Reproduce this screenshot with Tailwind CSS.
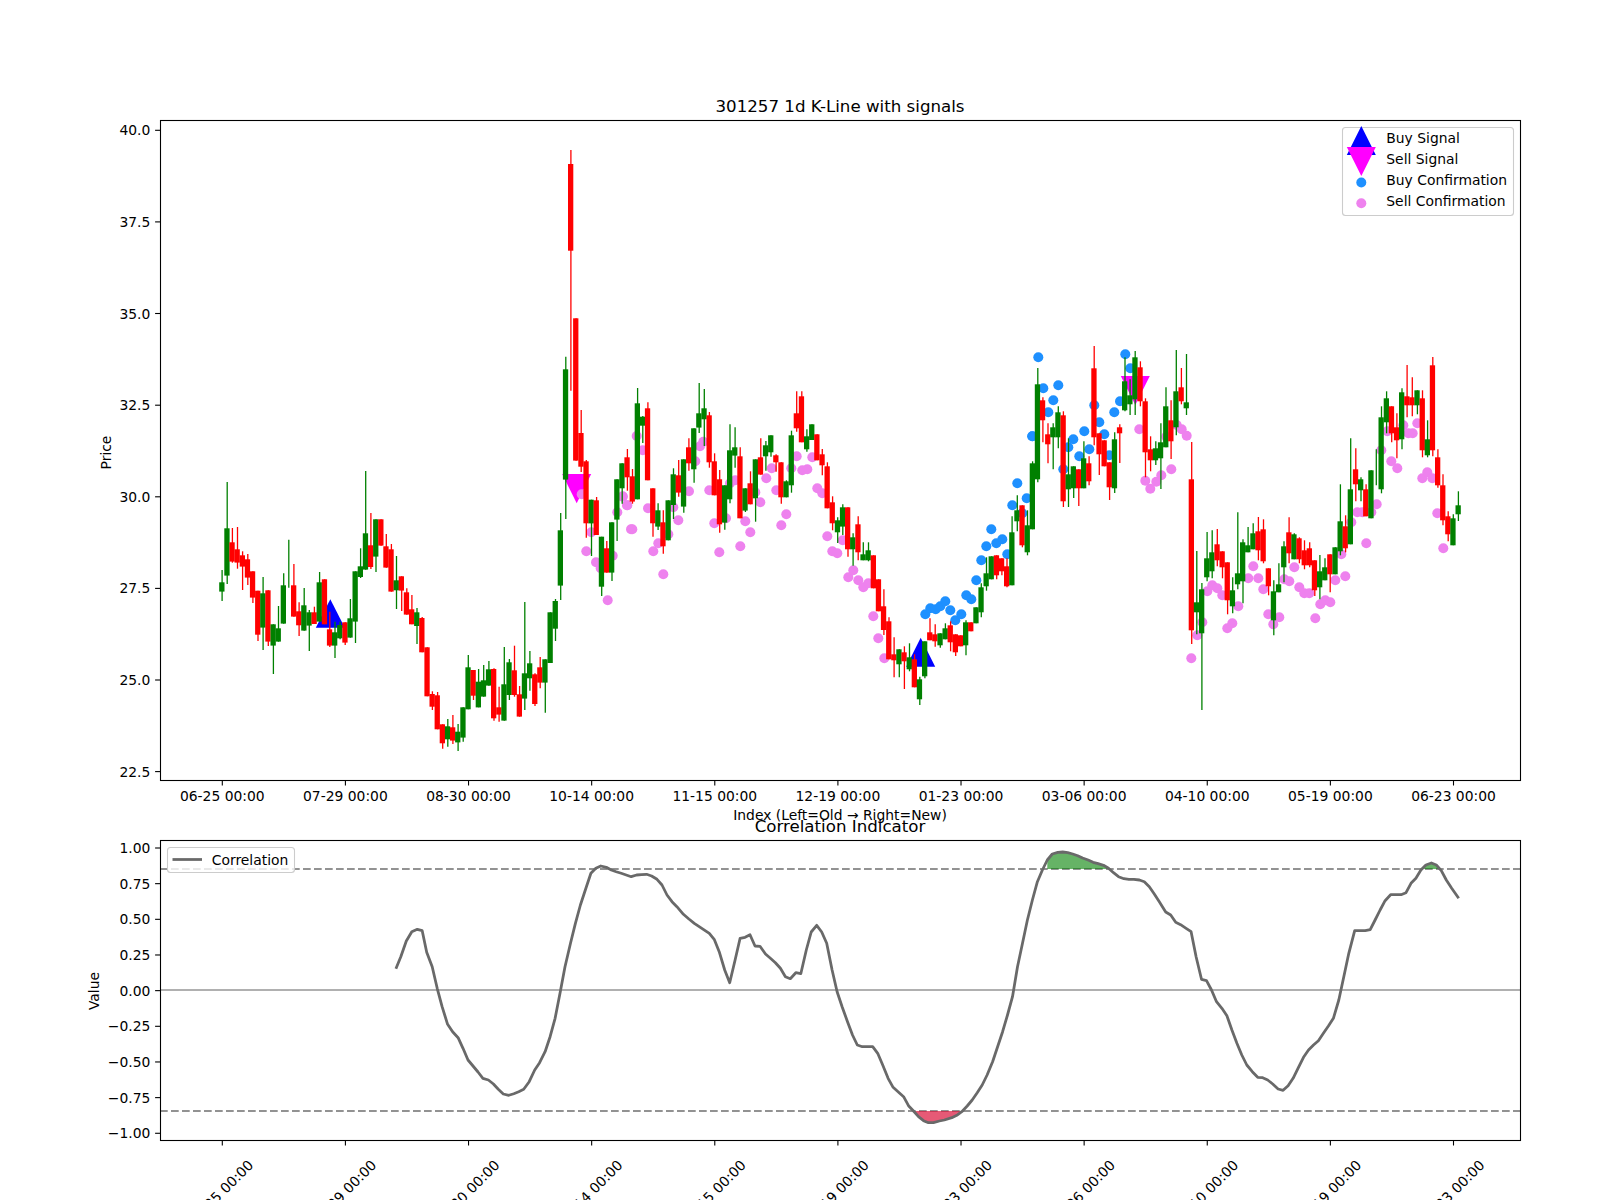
<!DOCTYPE html>
<html lang="en">
<head>
    <meta charset="utf-8"/>
    <title>301257 1d K-Line with signals</title>
    <script src="https://cdn.jsdelivr.net/npm/@tailwindcss/browser@4"></script>
</head>
<body class="bg-white">
    <div class="w-[1600px] h-[1200px] overflow-hidden bg-white font-['DejaVu_Sans',sans-serif] text-[13.89px] text-black">
        <svg id="chart" class="block fill-black" width="1600" height="1200" viewBox="0 0 1600 1200" xmlns="http://www.w3.org/2000/svg"></svg>
    </div>

    <script>
        // candles: colour, wick top, body top, body bottom, wick bottom (y = y0 + v / 3)
        const candleSegments = [
            [440, `G 390 427 455 483|G 126 265 407 432|R 264 307 365 368|R 261 328 368 386|R 334 346 380 450|R 342 358 413 435|R 394 394 473 489|R 452 452 584 603|G 411 460 563 630|R 451 451 605 618|G 553 553 617 702|G 498 565 605 605|G 400 436 551 551|G 299 0 0 443|R 372 436 530 530|R 487 514 556 588|G 444 496 572 572|G 510 517 557 633|R 500 517 552 552|G 396 427 545 545|R 418 418 553 553|R 515 568 617 621|G 545 577 617 654|G 545 555 595 598|R 547 547 608 615|G 477 535 593 593|G 394 394 545 609|G 325 379 411 414|G 93 280 389 389|R 219 316 381 387|G 238 238 350 396|R 238 238 317 317|R 282 319 383 383|R 312 328 455 455|G 348 421 451 507|R 409 409 452 513|R 445 457 524 524|R 465 508 553 553|G 504 517 558 612|R 531 534 637 637|R 622 622 769 769|R 754 762 800 810|R 756 766 868 868|R 853 853 910 926|G 837 859 898 920|R 825 862 902 912|G 852 875 907 933|G 802 802 893 905|G 645 682 808 808|R 690 690 767 780|G 687 725 802 802|G 675 721 770 770|G 663 688 737 737|R 685 687 835 842|R 740 802 824 845|G 621 733 842 842|G 657 667 765 780|R 617 691 765 770|R 738 763 830 830|G 486 700 776 810|G 633 670 715 752|R 700 703 792 798|R 651 682 728 745|G 658 658 728 818|G 517 517 669 669|G 477 483 566 603|G 219 271 437 480|G -250 -212 119 237|R -870 -828 -568 -148|R -365 -365 62 62|R -90 -21 80 96|R 60 64 250 293|G 179 179 250 348|R 171 181 285 285|G 290 290 440 468|R 303 325 398 398|G 247 247 398 423|G 118 118 239 303|G 70 70 145 191|R 27 52 112 152`],
            [360, `R 327 349 425 431|G 84 130 418 418|G 168 170 197 249|R 127 145 361 361|R 385 385 490 530|G 430 451 500 510|R 451 487 559 581|G 421 421 541 541|G 325 343 435 477|R 300 346 398 410|G 298 298 440 458|R 235 262 310 332|G 205 205 328 368|G 69 160 203 219|G 87 145 178 258|R 156 166 307 323|R 280 304 406 406|R 330 358 493 518|G 376 376 488 509|G 193 271 418 430|G 202 262 287 323|R 262 289 475 475|G 385 385 452 456|R 334 370 433 433|G 298 298 415 485|R 235 292 344 344|G 243 256 289 332|G 226 226 277 290|R 283 286 307 335|R 307 307 412 431|G 361 364 412 412|G 212 226 376 398|R 94 160 205 215|R 94 109 247 247|G 208 229 268 275|G 193 193 240 240|R 223 223 301 301|R 267 283 316 346|R 307 319 445 445|R 409 427 490 511|G 472 481 517 549|G 433 442 500 525|R 442 442 568 590|G 520 532 568 617|R 469 493 577 601|G 547 583 601 601|G 547 571 601 604|R 586 586 685 685|R 658 658 754 754|R 688 739 810 825|R 772 784 898 898|R 832 883 901 952|G 868 868 913 952|R 859 877 904 987|G 850 892 928 934|R 883 898 982 982|G 950 958 1018 1035|G 844 844 949 955|R 775 817 841 841|R 793 823 844 860|G 820 820 856 863|G 790 805 838 838|R 784 796 847 874|R 823 823 877 888|R 826 826 859 859|G 781 787 856 886|R 787 787 814 814|G 742 742 790 790|G 670 682 757 772|G 592 640 679 692|G 589 589 658 658|R 586 586 646 658|R 595 595 634 646|R 595 619 679 682|G 469 517 676 676|G 406 451 484 514|R 436 436 556 562|G 451 496 577 586|G 304 310 508 508|G 24 73 358 367|R 112 121 181 247|R 190 223 253 310|G 190 202 232 328|G 139 157 232 265`],
            [330, `R 244 256 514 531|G 325 433 478 531|G 409 409 475 504|R 418 418 475 528|G 334 385 475 475|R 379 400 454 466|R 48 115 322 346|R 310 310 373 435|R 331 331 409 409|R 397 397 472 510|G 307 328 475 489|R 283 292 310 399|G 82 154 241 244|G 148 196 223 255|G 63 82 208 255|R 94 112 214 229|R 205 214 367 442|R 319 358 391 424|G 334 355 391 405|G 280 337 385 477|G 172 229 352 352|R 211 271 334 387|G 60 184 292 316|R 114 172 214 223|G 72 217 235 255`],
            [340, `R 306 418 871 912|G 633 787 817 883|G 729 748 880 1110|G 576 655 712 724|G 571 637 694 715|R 567 613 661 679|R 634 634 682 715|R 667 667 781 823|G 712 751 799 820|G 517 700 733 748|G 598 607 724 790|G 561 616 637 637|G 550 580 628 628|R 531 574 631 661|R 538 568 664 670|R 685 685 739 766|G 721 754 841 886|G 670 733 757 757|G 604 619 682 727|R 532 577 640 670|G 580 583 658 658|R 592 595 658 670|R 601 631 676 688|R 607 625 676 682|R 661 661 751 768|G 645 694 742 778|G 655 682 721 721|R 643 643 703 757|G 622 622 703 703|G 433 544 634 646|R 526 559 625 637|G 295 448 613 613|R 325 388 433 484|G 412 418 451 484|R 433 448 529 529|G 391 391 535 535|G 328 0 0 436|G 199 232 448 460|G 154 175 247 280|R 199 199 280 307|R 220 262 301 355|G 145 157 298 328|R 75 169 196 232|R 112 172 196 229|G 151 151 196 223|R 151 175 331 352|G 241 298 346 352|R 51 76 331 349|R 328 352 436 443|R 403 436 541 556|R 514 529 583 604|G 523 535 616 616|G 454 496 523 543`]
        ];

        // confirmation dots, read as [x0, y0, "x,y ..."] (real = x0 + x / 3)
        const pinkDots = [
            [150, 440, '1295,163 1324,277 1309,334 1338,367 1352,385 1373,481 1388,347 1402,217 1418,170 1431,196 1443,268'],
            [620, 360, '50,228 68,271 8,409 22,436 84,445 37,508 115,550 100,574 130,643 145,523 160,442 175,481 207,394 226,304 240,259 250,245 268,391 283,490 298,577 318,475 330,370 346,361 361,559 376,484 391,517 406,397 421,427 439,355 455,325 469,391 484,496 499,463 514,325 530,289 547,331 562,328 577,292 592,385 607,400 622,529 637,574 652,580 668,541 685,652 700,631 715,661 730,682 745,670 760,769 775,835 793,895'],
            [1000, 330, '418,298 436,452 451,476 469,455 484,436 499,320 514,418 530,285 545,298 560,317'],
            [1180, 340, '34,955 52,886 67,847 82,754 97,736 112,745 127,766 142,865 157,850 175,799 205,715 220,679 235,715 250,748 265,823 280,853 298,832 313,718 328,724 343,682 358,742 373,760 388,760 406,835 421,793 436,781 451,787 466,721 484,643 496,709 514,547 532,517 547,517 559,610 574,517 590,493 604,331 622,274 634,364 652,385 670,256 685,280 698,280 712,250 727,415 742,397 757,415 772,520 790,625']
        ];
        const blueDots = [
            [620, 360, '916,763 931,745 947,748 961,739 976,724 991,751 1006,781 1024,763 1039,706 1054,718 1069,661 1084,601 1099,559 1114,508 1129,550 1147,538 1162,583 1177,436 1192,370 1207,460 1220,415 1237,229'],
            [1000, 330, '97,319 115,82 130,175 145,247 160,211 175,166 190,418 205,352 220,328 238,379 253,304 268,358 283,226 298,277 313,313 328,376 343,247 360,214 376,73 391,115']
        ];

        // correlation line, zoomed coords: x = x0 + x / 2.0103, y = 780 + y / 3
        const corrA = '635,566 645,530 656,483 667,455 678,448 688,452 697,517 708,560 718,625 728,680 739,733 749,755 760,773 770,805 780,840 790,858 800,876 810,895 821,900 831,912 841,928 851,942 862,946 872,941 882,935 892,928 903,905 914,870 924,848 935,815 945,770 955,715 965,640 975,560 986,490 996,430 1006,375 1017,325 1027,280 1037,265 1047,258 1058,262 1068,270 1078,275 1088,280 1098,285 1108,290 1119,285 1129,284 1139,283 1149,288 1160,298 1170,315 1180,345 1190,365 1200,380 1213,403 1224,417 1235,430 1250,445 1265,460 1275,478 1285,515 1296,570 1306,608 1317,540 1327,475 1337,472 1347,464 1357,498 1367,499 1378,522 1388,535 1398,548 1408,565 1418,590 1428,596 1439,578 1449,581 1460,510 1470,456 1481,436 1491,456 1501,490 1512,570 1522,635 1532,680 1543,725 1553,765';
        const corrB = '75,795 85,800 106,800 116,820 126,855 137,895 147,922 158,937 168,950 178,977 188,993 198,1010 208,1022 218,1028 228,1028 240,1023 250,1020 265,1013 275,1006 285,995 296,978 306,960 316,938 326,915 336,885 347,845 357,800 367,755 377,705 387,650 397,560 407,490 417,420 427,360 437,305 447,270 457,240 467,222 478,217 488,216 498,218 508,222 518,227 528,234 539,240 549,247 559,251 570,256 580,265 590,278 600,290 611,296 621,298 631,298 642,300 652,305 662,320 672,342 682,365 695,396 705,405 715,427 725,434 736,445 746,455 756,530 767,598 777,602 787,630 797,665 808,685 818,707 828,750 838,790 848,825 858,855 869,875 880,892 890,893 900,900 910,912 921,927 931,931 941,917 951,895 961,865 972,832 982,810 992,795 1002,782 1012,760 1022,738 1032,715 1043,660 1053,590 1063,520 1075,452 1086,452 1096,452 1106,449 1116,420 1126,390 1136,362 1147,344 1157,344 1168,344 1178,338 1188,310 1198,295 1208,270 1218,255 1229,249 1239,255 1249,272 1259,300 1270,325 1284,355';

        const tickLabels = ['06-25 00:00', '07-29 00:00', '08-30 00:00', '10-14 00:00', '11-15 00:00', '12-19 00:00', '01-23 00:00', '03-06 00:00', '04-10 00:00', '05-19 00:00', '06-23 00:00'];
        const priceTicks = [['40.0', 130.3], ['37.5', 221.9], ['35.0', 313.5], ['32.5', 405.2], ['30.0', 496.8], ['27.5', 588.4], ['25.0', 680], ['22.5', 771.6]];
        const valueTicks = ['1.00', '0.75', '0.50', '0.25', '0.00', '−0.25', '−0.50', '−0.75', '−1.00'];
        const xOf = i => 221.8 + 5.13 * i;

        let out = '';
        const line = (x1, y1, x2, y2, stroke, w, extra = '') => `<line x1="${x1}" y1="${y1}" x2="${x2}" y2="${y2}" stroke="${stroke}" stroke-width="${w}" ${extra}/>`;
        const text = (x, y, s, extra = '') => `<text x="${x}" y="${y}" ${extra}>${s}</text>`;
        const poly = (pts, fill, extra = '') => `<polygon points="${pts}" fill="${fill}" ${extra}/>`;
        const parsePts = s => s.split(' ').map(p => p.split(',').map(Number));

        function triangle(x, tipY, baseY, fill) {
            return poly(`${x},${tipY} ${x - 14.5},${baseY} ${x + 14.5},${baseY}`, fill);
        }

        function axesFrame(top, bottom) {
            return `<rect x="160.5" y="${top}" width="1360" height="${bottom - top}" fill="none" stroke="#000" stroke-width="1.1"/>`;
        }

        // top panel
        out += triangle(330.3, 599.3, 627.7, '#0000ff');
        out += triangle(920.7, 637.7, 666.7, '#0000ff');
        out += triangle(576.7, 503.3, 474, '#ff00ff');
        out += triangle(1135.3, 405, 376, '#ff00ff');

        pinkDots.concat(blueDots).forEach(([x0, y0, list], idx) => {
            const fill = idx < pinkDots.length ? '#ee82ee' : '#1e90ff';
            parsePts(list).forEach(([x, y]) => {
                out += `<circle cx="${(x0 + x / 3).toFixed(1)}" cy="${(y0 + y / 3).toFixed(1)}" r="5" fill="${fill}"/>`;
            });
        });

        let idx = 0;
        candleSegments.forEach(([y0, rows]) => {
            rows.split('|').forEach(row => {
                const [c, wt, bt, bb, wb] = row.split(' ');
                const fill = c === 'G' ? '#008000' : '#ff0000';
                const x = xOf(idx);
                const y = v => (y0 + Number(v) / 3).toFixed(1);
                out += line((x + 0.3).toFixed(1), y(wt), (x + 0.3).toFixed(1), y(wb), fill, 1.3);
                if (bt !== bb) {
                    out += `<rect x="${(x - 2.65).toFixed(1)}" y="${y(bt)}" width="5.3" height="${(Number(bb - bt) / 3).toFixed(1)}" fill="${fill}"/>`;
                }
                idx++;
            });
        });

        out += axesFrame(120.5, 780.5);
        priceTicks.forEach(([label, y]) => {
            out += line(155.1, y, 160, y, '#000', 1.1);
            out += text(150.3, y + 5, label, 'text-anchor="end"');
        });
        tickLabels.forEach((label, i) => {
            const x = xOf(i * 24) + 0.5;
            out += line(x, 781, x, 785.5, '#000', 1.1);
            out += text(x, 801, label, 'text-anchor="middle"');
        });
        out += text(840, 112, '301257 1d K-Line with signals', 'text-anchor="middle" font-size="16.67"');
        out += text(840, 820, 'Index (Left=Old → Right=New)', 'text-anchor="middle"');
        out += text(111, 452.5, 'Price', 'text-anchor="middle" transform="rotate(-90 111 452.5)"');

        // top legend
        out += `<rect x="1342.5" y="127.5" width="171" height="88" rx="3" fill="#fff" fill-opacity="0.8" stroke="#ccc" stroke-width="1.1"/>`;
        out += triangle(1361.3, 126, 155, '#0000ff');
        out += triangle(1361.3, 176, 147, '#ff00ff');
        out += `<circle cx="1361.3" cy="182.5" r="5" fill="#1e90ff"/><circle cx="1361.3" cy="203.3" r="5" fill="#ee82ee"/>`;
        ['Buy Signal', 'Sell Signal', 'Buy Confirmation', 'Sell Confirmation'].forEach((label, i) => {
            out += text(1386.3, 143.3 + i * 20.9, label);
        });

        // bottom panel
        const ptsA = parsePts(corrA).map(([x, y]) => [80 + x / 2.0103, 780 + y / 3]);
        const ptsB = parsePts(corrB).map(([x, y]) => [820 + x / 2.0103, 780 + y / 3]);
        const corr = ptsA.concat(ptsB);
        const fmt = pts => pts.map(p => p[0].toFixed(1) + ',' + p[1].toFixed(1)).join(' ');

        out += line(160, 869, 1520, 869, '#929292', 2.08, 'stroke-dasharray="7.7 3.3"');
        out += line(160, 1111, 1520, 1111, '#929292', 2.08, 'stroke-dasharray="7.7 3.3"');
        out += line(160, 990, 1520, 990, '#b0b0b0', 2);

        // shaded zones past the thresholds
        [[1045, 1110, 869, '#008000', 0.6], [1420, 1445, 869, '#008000', 0.6]].forEach(([a, b, level, fill, op]) => {
            const part = corr.filter(p => p[0] >= a && p[0] <= b && p[1] <= level + 2);
            out += poly(`${part[0][0].toFixed(1)},${level} ${fmt(part)} ${part[part.length - 1][0].toFixed(1)},${level}`, fill, `fill-opacity="${op}"`);
        });
        const low = corr.filter(p => p[0] >= 900 && p[0] <= 965 && p[1] >= 1110);
        out += poly(`${low[0][0].toFixed(1)},1111 ${fmt(low)} ${low[low.length - 1][0].toFixed(1)},1111`, '#dc143c', 'fill-opacity="0.7"');

        out += `<polyline points="${fmt(corr)}" fill="none" stroke="#696969" stroke-width="2.78" stroke-linejoin="round"/>`;

        out += axesFrame(840.5, 1140.5);
        valueTicks.forEach((label, i) => {
            const y = 848 + 35.66 * i;
            out += line(155.1, y, 160, y, '#000', 1.1);
            out += text(150.3, y + 5, label, 'text-anchor="end"');
        });
        tickLabels.forEach((label, i) => {
            const x = xOf(i * 24) + 0.5;
            out += line(x, 1141, x, 1145.5, '#000', 1.1);
            out += text(x + 2, 1196, label, `text-anchor="middle" transform="rotate(-45 ${x + 2} 1196)"`);
        });
        out += text(840, 832, 'Correlation Indicator', 'text-anchor="middle" font-size="16.67"');
        out += text(99, 991, 'Value', 'text-anchor="middle" transform="rotate(-90 99 991)"');

        // bottom legend
        out += `<rect x="167.5" y="847.5" width="127" height="25" rx="3" fill="#fff" fill-opacity="0.8" stroke="#ccc" stroke-width="1.1"/>`;
        out += line(172.5, 859.5, 202, 859.5, '#696969', 2.78);
        out += text(211.8, 864.5, 'Correlation');

        document.getElementById('chart').innerHTML = out;
    </script>
</body>
</html>
